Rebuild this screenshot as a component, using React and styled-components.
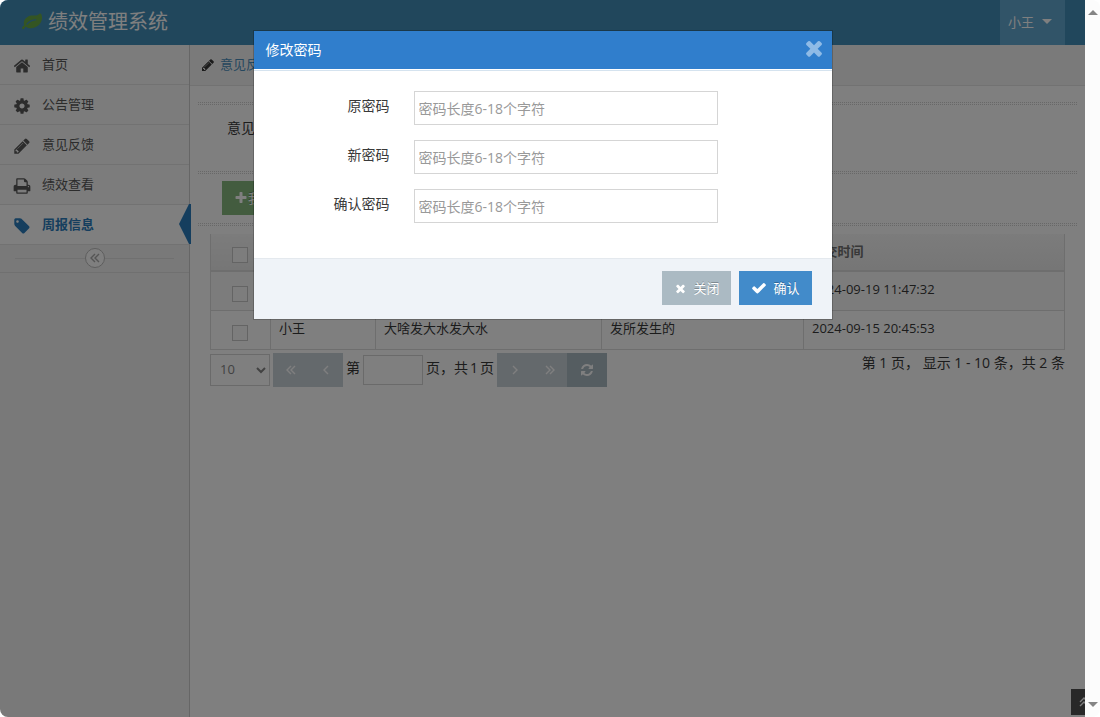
import React from "react";
import styled, { createGlobalStyle } from "styled-components";

const GlobalStyle = createGlobalStyle`
  * {
    box-sizing: border-box;
  }

  body {
    margin: 0;
    background: #ffffff;
    color: #393939;
    font-family: "Open Sans", "Noto Sans CJK SC", sans-serif;
    font-size: 13px;
    line-height: 20px;
  }

  button,
  input,
  select {
    margin: 0;
    font-family: inherit;
  }
`;

const icons = {
  leaf: "M1280 704q0-26-19-45t-45-19q-172 0-318 49.500t-259.500 134-235.500 219.500q-19 21-19 45 0 26 19 45t45 19q24 0 45-19 27-24 74-71t67-66q137-124 268.500-176t313.500-52q26 0 45-19t19-45zm512-198q0 95-20 193-46 224-184.500 383t-357.500 268q-214 108-438 108-148 0-286-47-15-5-88-42t-96-37q-16 0-39.500 32t-45 70-52.500 70-60 32q-43 0-63.500-17.500t-45.500-59.500q-2-4-6-11t-5.500-10-3-9.500-1.500-13.500q0-35 31-73.500t68-65.500 68-56 31-48q0-4-14-38t-16-44q-9-51-9-104 0-115 43.500-220t119-184.500 170.500-139 204-95.500q55-18 145-25.500t179.500-9 178.500-6 163.500-24 113.500-56.500l29.500-29.500 29.500-28 27-20 36.500-16 43.500-4.500q39 0 70.500 46t47.500 112 24 124 8 96z",
  home: "M1472 992v480q0 26-19 45t-45 19h-384v-384h-256v384h-384q-26 0-45-19t-19-45v-480q0-1 .5-3t.5-3l575-474 575 474q1 2 1 6zm223-69l-62 74q-8 9-21 11h-3q-13 0-21-7l-692-577-692 577q-12 8-24 7-13-2-21-11l-62-74q-8-10-7-23.500t11-21.500l719-599q32-26 76-26t76 26l244 204v-195q0-14 9-23t23-9h192q14 0 23 9t9 23v408l219 182q10 8 11 21.500t-7 23.500z",
  cog: "M1152 896q0-106-75-181t-181-75-181 75-75 181 75 181 181 75 181-75 75-181zm512-109v222q0 12-8 23t-20 13l-185 28q-19 54-39 91 35 50 107 138 10 12 10 25t-9 23q-27 37-99 108t-94 71q-12 0-26-9l-138-108q-44 23-91 38-16 136-29 186-7 28-36 28h-222q-14 0-24.500-8.500t-11.500-21.500l-28-184q-49-16-90-37l-141 107q-10 9-25 9-14 0-25-11-126-114-165-168-7-10-7-23 0-12 8-23 15-21 51-66.500t54-70.500q-27-50-41-99l-183-27q-13-2-21-12.500t-8-23.500v-222q0-12 8-23t19-13l186-28q14-46 39-92-40-57-107-138-10-12-10-24 0-10 9-23 26-36 98.500-107.500t94.500-71.500q13 0 26 10l138 107q44-23 91-38 16-136 29-186 7-28 36-28h222q14 0 24.500 8.500t11.500 21.500l28 184q49 16 90 37l142-107q9-9 24-9 13 0 25 10 129 119 165 170 7 8 7 22 0 12-8 23-15 21-51 66.500t-54 70.500q26 50 41 98l183 28q13 2 21 12.500t8 23.500z",
  pencil: "M491 1536l91-91-235-235-91 91v107h128v128h107zm523-928q0-22-22-22-10 0-17 7l-542 542q-7 7-7 17 0 22 22 22 10 0 17-7l542-542q7-7 7-17zm-54-192l416 416-832 832h-416v-416zm683 96q0 53-37 90l-166 166-416-416 166-165q36-38 90-38 53 0 91 38l235 234q37 39 37 91z",
  print: "M448 1536h896v-256h-896v256zm0-640h896v-384h-160q-40 0-68-28t-28-68v-160h-640v640zm1152 64q0-26-19-45t-45-19-45 19-19 45 19 45 45 19 45-19 19-45zm128 0v416q0 13-9.500 22.500t-22.500 9.500h-224v160q0 40-28 68t-68 28h-960q-40 0-68-28t-28-68v-160h-224q-13 0-22.500-9.500t-9.500-22.500v-416q0-79 56.500-135.500t135.500-56.500h64v-544q0-40 28-68t68-28h672q40 0 88 20t76 48l152 152q28 28 48 76t20 88v256h64q79 0 135.500 56.500t56.500 135.500z",
  tag: "M576 448q0-53-37.500-90.500t-90.500-37.500-90.500 37.500-37.500 90.500 37.500 90.500 90.500 37.500 90.500-37.500 37.500-90.500zm1067 576q0 53-37 90l-491 492q-39 37-91 37-53 0-90-37l-715-716q-38-37-64.500-101t-26.500-117v-416q0-52 38-90t90-38h416q53 0 117 26.500t102 64.500l715 714q37 39 37 91z",
  times: "M1490 1322q0 40-28 68l-136 136q-28 28-68 28t-68-28l-294-294-294 294q-28 28-68 28t-68-28l-136-136q-28-28-28-68t28-68l294-294-294-294q-28-28-28-68t28-68l136-136q28-28 68-28t68 28l294 294 294-294q28-28 68-28t68 28l136 136q28 28 28 68t-28 68l-294 294 294 294q28 28 28 68z",
  check: "M1671 566q0 40-28 68l-724 724-136 136q-28 28-68 28t-68-28l-136-136-362-362q-28-28-28-68t28-68l136-136q28-28 68-28t68 28l294 295 656-657q28-28 68-28t68 28l136 136q28 28 28 68z",
  refresh: "M1639 1056q0 5-1 7-64 268-268 434.500t-478 166.500q-146 0-282.500-55t-243.500-157l-129 129q-19 19-45 19t-45-19-19-45v-448q0-26 19-45t45-19h448q26 0 45 19t19 45-19 45l-137 137q71 66 161 102t187 36q134 0 250-65t186-179q11-17 53-117 8-23 30-23h192q13 0 22.500 9.500t9.500 22.500zm25-800v448q0 26-19 45t-45 19h-448q-26 0-45-19t-19-45 19-45l138-138q-148-137-349-137-134 0-250 65t-186 179q-11 17-53 117-8 23-30 23h-199q-13 0-22.500-9.500t-9.500-22.500v-7q65-268 270-434.500t480-166.500q146 0 284 55.500t245 156.500l130-129q19-19 45-19t45 19 19 45z",
  plus: "M1600 736v192q0 40-28 68t-68 28h-416v416q0 40-28 68t-68 28h-192q-40 0-68-28t-28-68v-416h-416q-40 0-68-28t-28-68v-192q0-40 28-68t68-28h416v-416q0-40 28-68t68-28h192q40 0 68 28t28 68v416h416q40 0 68 28t28 68z",
};

const Svg = styled.svg`
  display: block;
  flex: none;
`;

const Icon = ({ name, size = 14 }) => (
  <Svg width={size} height={size} viewBox="0 0 1792 1792" fill="currentColor" aria-hidden="true">
    <path d={icons[name]} />
  </Svg>
);

const angles = {
  left: "M9 3L5 7L9 11",
  right: "M5 3L9 7L5 11",
  doubleLeft: "M7 3L3 7L7 11M11 3L7 7L11 11",
  doubleRight: "M3 3L7 7L3 11M7 3L11 7L7 11",
  doubleUp: "M3 7L7 3L11 7M3 11L7 7L11 11",
};

const Angle = ({ name, size = 14 }) => (
  <Svg width={size} height={size} viewBox="0 0 14 14" fill="none" stroke="currentColor" strokeWidth="1.4" aria-hidden="true">
    <path d={angles[name]} />
  </Svg>
);

const Window = styled.div`
  display: flex;
  min-height: 100vh;
`;

const Page = styled.div`
  position: relative;
  display: flex;
  flex: 1;
  flex-direction: column;
  min-width: 0;
  overflow: hidden;
  background: #ffffff;
  border-radius: 8px 0 0 8px;
`;

const ScrollTrack = styled.div`
  display: flex;
  flex: none;
  flex-direction: column;
  align-items: center;
  justify-content: space-between;
  width: 15px;
  padding: 10px 0;
  background: #fcfcfc;
  border-radius: 0 8px 8px 0;
`;

const ScrollArrow = styled.span`
  border: 5px solid transparent;
  border-top-width: ${(props) => (props.$up ? 0 : "5px")};
  border-bottom-width: ${(props) => (props.$up ? "5px" : 0)};
  border-top-color: ${(props) => (props.$up ? "transparent" : "#858585")};
  border-bottom-color: ${(props) => (props.$up ? "#858585" : "transparent")};
`;

const Navbar = styled.header`
  display: flex;
  align-items: center;
  justify-content: space-between;
  height: 45px;
  padding: 0 20px 0 22px;
  background: #438eb9;
`;

const Brand = styled.a`
  display: flex;
  align-items: center;
  gap: 6px;
  padding-bottom: 2px;
  color: #ffffff;
  font-size: 20px;
  line-height: 42px;
  text-decoration: none;

  svg {
    color: #69aa46;
  }
`;

const UserButton = styled.button`
  display: flex;
  align-items: center;
  gap: 8px;
  height: 45px;
  padding: 0 13px 2px 8px;
  border: 0;
  background: #62a8d1;
  color: #ffffff;
  font-size: 13px;
`;

const Caret = styled.span`
  border: 5px solid transparent;
  border-top-color: #ffffff;
  border-bottom: 0;
`;

const Main = styled.div`
  display: flex;
  flex: 1;
`;

const Sidebar = styled.nav`
  flex: none;
  width: 190px;
  background: #f2f2f2;
  border-right: 1px solid #cccccc;
`;

const Menu = styled.ul`
  margin: 0;
  padding: 0;
  list-style: none;
`;

const MenuItem = styled.li`
  position: relative;
  border-bottom: 1px solid #e5e5e5;
`;

const MenuLink = styled.a`
  display: flex;
  align-items: center;
  gap: 11px;
  height: 39px;
  padding: 0 13px 2px;
  background: ${(props) => (props.$active ? "#ffffff" : "#f9f9f9")};
  color: ${(props) => (props.$active ? "#2b7dbc" : "#585858")};
  font-weight: ${(props) => (props.$active ? "bold" : "normal")};
  text-decoration: none;

  svg {
    margin-top: 4px;
  }
`;

const ActiveMark = styled.span`
  position: absolute;
  top: -1px;
  right: 0;
  height: 40px;
  border: 20px solid transparent;
  border-left-width: 0;
  border-right: 10px solid #2b7dbc;
  box-shadow: 2px 0 0 #2b7dbc;
`;

const SidebarToggle = styled.div`
  display: flex;
  align-items: center;
  height: 28px;
  padding: 0 15px 1px;
  background: #f3f3f3;
  border-bottom: 1px solid #e0e0e0;

  &::before,
  &::after {
    flex: 1;
    height: 1px;
    background: #e0e0e0;
    content: "";
  }
`;

const ToggleButton = styled.button`
  display: grid;
  place-items: center;
  width: 20px;
  height: 20px;
  padding: 0;
  border: 1px solid #bbbbbb;
  border-radius: 10px;
  background: #ffffff;
  color: #aaaaaa;
`;

const Content = styled.main`
  flex: 1;
  min-width: 0;
`;

const Breadcrumb = styled.div`
  display: flex;
  align-items: center;
  gap: 5px;
  height: 41px;
  padding: 0 11px;
  background: #f5f5f5;
  border-bottom: 1px solid #e5e5e5;

  a {
    padding-bottom: 2px;
    color: #4c8fbd;
    text-decoration: none;
  }
`;

const PageBody = styled.div`
  padding: 16px 8px;
`;

const Divider = styled.hr`
  height: 3px;
  margin: 0;
  border: 0;
  border-top: 1px dotted #d0d0d0;
  border-bottom: 1px dotted #d0d0d0;
`;

const SearchBar = styled.div`
  height: 66px;
  padding: 13px 29px;
  font-size: 14px;
`;

const Toolbar = styled.div`
  height: 49px;
  padding: 7px 24px;
`;

const Grid = styled.section`
  padding: 8px 12px;
`;

const Table = styled.table`
  width: 100%;
  border-collapse: collapse;
  table-layout: fixed;
`;

const HeadCell = styled.th`
  height: 37px;
  padding: 6px 8px 8px;
  border-bottom: 2px solid #dddddd;
  background: linear-gradient(to bottom, #f8f8f8, #ececec);
  color: #707070;
  font-weight: bold;
  text-align: left;
  vertical-align: middle;

  &:first-child {
    border-left: 1px solid #dddddd;
  }

  &:last-child {
    border-right: 1px solid #dddddd;
  }
`;

const Row = styled.tr`
  background: ${(props) => (props.$striped ? "#f9f9f9" : "#ffffff")};
`;

const Cell = styled.td`
  height: 39px;
  padding: 7px 8px 11px;
  border: 1px solid #dddddd;
`;

const Check = styled.input`
  display: block;
  width: 16px;
  height: 16px;
  margin: 5px auto 0;
  appearance: none;
  border: 1px solid #c8c8c8;
  background: #fafafa;
`;

const CheckHeadCell = styled(HeadCell)`
  padding: 0 2px 0 0;
`;

const CheckCell = styled(Cell)`
  padding: 0 2px 0 0;
`;

const Footer = styled.div`
  display: flex;
  justify-content: space-between;
  padding-top: 3px;
  font-size: 14px;
`;

const Pager = styled.div`
  display: flex;
  align-items: center;
  gap: 3px;
`;

const PageSize = styled.select`
  width: 60px;
  height: 32px;
  padding: 0 0 2px 5px;
  border: 1px solid #d5d5d5;
  border-radius: 0;
  background: #ffffff;
  color: #858585;
  font-size: 13px;
`;

const ButtonGroup = styled.div`
  display: flex;
`;

const PagerButton = styled.button`
  display: grid;
  place-items: center;
  width: ${(props) => (props.$wide ? "40px" : "35px")};
  height: 34px;
  padding: 0;
  border: 0;
  background: ${(props) => (props.$wide ? "#abbac3" : "#c8d2d8")};
  color: #ffffff;
`;

const PagerText = styled.span`
  display: flex;
  gap: 2px;
  padding-bottom: 4px;
`;

const PageInput = styled.input`
  width: 60px;
  height: 30px;
  border: 1px solid #d5d5d5;
  background: #ffffff;
`;

const Summary = styled.span`
  white-space: pre;
`;

const Button = styled.button`
  display: flex;
  align-items: center;
  gap: ${(props) => (props.$tight ? 0 : "6px")};
  height: 34px;
  padding: 0 12px 2px;
  border: 0;
  background: ${(props) => props.$color};
  color: #ffffff;
  font-size: 13px;
  text-shadow: 0 -1px 0 rgba(0, 0, 0, 0.25);

  svg {
    margin-top: 2px;
  }
`;

const ScrollUp = styled.button`
  position: absolute;
  right: -12px;
  bottom: 2px;
  display: grid;
  place-items: center;
  width: 26px;
  height: 26px;
  padding: 0;
  border: 0;
  background: #505050;
  color: #ffffff;
`;

const Backdrop = styled.div`
  position: absolute;
  inset: 0;
  padding: 30px 10px;
  background: rgba(0, 0, 0, 0.5);
`;

const Dialog = styled.section`
  width: 100%;
  max-width: 580px;
  margin: 0 auto;
  border: 1px solid rgba(0, 0, 0, 0.2);
  background: #ffffff;
  background-clip: padding-box;
`;

const DialogHeader = styled.div`
  display: flex;
  align-items: center;
  justify-content: space-between;
  height: 38px;
  padding: 0 6px 0 12px;
  background: #307ecc;
  color: #ffffff;
`;

const DialogTitle = styled.h2`
  margin: 0;
  font-size: 14px;
  font-weight: normal;
`;

const CloseButton = styled.button`
  padding: 0 0 4px;
  border: 0;
  background: none;
  color: #8fbbe6;
`;

const DialogForm = styled.form`
  display: flex;
  flex-direction: column;
  gap: 15px;
  margin-top: 1px;
  padding: 20px 12px 35px;
  border-top: 1px solid #d5e3ef;
`;

const Field = styled.div`
  display: grid;
  grid-template-columns: 124px 304px;
  column-gap: 24px;
  font-size: 14px;

  label {
    padding-top: 5px;
    text-align: right;
  }
`;

const TextInput = styled.input`
  height: 34px;
  padding: 5px 4px 4px;
  border: 1px solid #d5d5d5;
  font-size: 14px;

  &::placeholder {
    color: #999999;
  }
`;

const DialogFooter = styled.div`
  display: flex;
  justify-content: flex-end;
  gap: 8px;
  padding: 12px 20px 14px;
  border-top: 1px solid #e4e9ee;
  background: #eff3f8;
`;

const menu = [
  { icon: "home", label: "首页" },
  { icon: "cog", label: "公告管理" },
  { icon: "pencil", label: "意见反馈" },
  { icon: "print", label: "绩效查看" },
  { icon: "tag", label: "周报信息", active: true },
];

const rows = [
  { user: "小王", title: "", content: "", time: "2024-09-19 11:47:32" },
  { user: "小王", title: "大啥发大水发大水", content: "发所发生的", time: "2024-09-15 20:45:53" },
];

const fields = [
  { id: "old-password", label: "原密码" },
  { id: "new-password", label: "新密码" },
  { id: "confirm-password", label: "确认密码" },
];

const PasswordDialog = () => (
  <Backdrop>
    <Dialog role="dialog" aria-modal="true" aria-labelledby="dialog-title">
      <DialogHeader>
        <DialogTitle id="dialog-title">修改密码</DialogTitle>
        <CloseButton type="button" aria-label="关闭">
          <Icon name="times" size={24} />
        </CloseButton>
      </DialogHeader>
      <DialogForm id="password-form">
        {fields.map((field) => (
          <Field key={field.id}>
            <label htmlFor={field.id}>{field.label}</label>
            <TextInput id={field.id} type="password" placeholder="密码长度6-18个字符" />
          </Field>
        ))}
      </DialogForm>
      <DialogFooter>
        <Button type="button" $color="#abbac3">
          <Icon name="times" size={13} />
          关闭
        </Button>
        <Button type="submit" form="password-form" $color="#428bca">
          <Icon name="check" size={16} />
          确认
        </Button>
      </DialogFooter>
    </Dialog>
  </Backdrop>
);

const ReportTable = () => (
  <Table>
    <colgroup>
      <col style={{ width: 60 }} />
      <col style={{ width: 105 }} />
      <col style={{ width: 226 }} />
      <col style={{ width: 202 }} />
      <col />
    </colgroup>
    <thead>
      <tr>
        <CheckHeadCell>
          <Check type="checkbox" aria-label="全选" />
        </CheckHeadCell>
        <HeadCell>提交人</HeadCell>
        <HeadCell>标题</HeadCell>
        <HeadCell>内容</HeadCell>
        <HeadCell>提交时间</HeadCell>
      </tr>
    </thead>
    <tbody>
      {rows.map((row, index) => (
        <Row key={row.time} $striped={index % 2 === 0}>
          <CheckCell>
            <Check type="checkbox" aria-label={row.time} />
          </CheckCell>
          <Cell>{row.user}</Cell>
          <Cell>{row.title}</Cell>
          <Cell>{row.content}</Cell>
          <Cell>{row.time}</Cell>
        </Row>
      ))}
    </tbody>
  </Table>
);

const App = () => {
  return (
    <Window>
      <GlobalStyle />
      <Page>
        <Navbar>
          <Brand href="#">
            <Icon name="leaf" size={20} />
            绩效管理系统
          </Brand>
          <UserButton type="button">
            小王
            <Caret />
          </UserButton>
        </Navbar>
        <Main>
          <Sidebar>
            <Menu>
              {menu.map((item) => (
                <MenuItem key={item.label}>
                  <MenuLink href="#" $active={item.active}>
                    <Icon name={item.icon} size={18} />
                    {item.label}
                  </MenuLink>
                  {item.active && <ActiveMark />}
                </MenuItem>
              ))}
            </Menu>
            <SidebarToggle>
              <ToggleButton type="button" aria-label="收起菜单">
                <Angle name="doubleLeft" />
              </ToggleButton>
            </SidebarToggle>
          </Sidebar>
          <Content>
            <Breadcrumb>
              <Icon name="pencil" />
              <a href="#">意见反馈</a>
            </Breadcrumb>
            <PageBody>
              <Divider />
              <SearchBar>意见标题</SearchBar>
              <Divider />
              <Toolbar>
                <Button type="button" $color="#87b87f" $tight>
                  <Icon name="plus" />
                  我要反馈
                </Button>
              </Toolbar>
              <Divider />
              <Grid>
                <ReportTable />
                <Footer>
                  <Pager>
                    <PageSize aria-label="每页条数" defaultValue="10">
                      <option>10</option>
                      <option>20</option>
                      <option>50</option>
                    </PageSize>
                    <ButtonGroup>
                      <PagerButton type="button" aria-label="首页">
                        <Angle name="doubleLeft" />
                      </PagerButton>
                      <PagerButton type="button" aria-label="上一页">
                        <Angle name="left" />
                      </PagerButton>
                    </ButtonGroup>
                    <PagerText>第</PagerText>
                    <PageInput type="text" aria-label="页码" />
                    <PagerText>
                      页，共 <span>1</span> 页
                    </PagerText>
                    <ButtonGroup>
                      <PagerButton type="button" aria-label="下一页">
                        <Angle name="right" />
                      </PagerButton>
                      <PagerButton type="button" aria-label="末页">
                        <Angle name="doubleRight" />
                      </PagerButton>
                      <PagerButton type="button" aria-label="刷新" $wide>
                        <Icon name="refresh" />
                      </PagerButton>
                    </ButtonGroup>
                  </Pager>
                  <Summary>第 1 页， 显示 1 - 10 条，共 2 条</Summary>
                </Footer>
              </Grid>
            </PageBody>
          </Content>
        </Main>
        <ScrollUp type="button" aria-label="返回顶部">
          <Angle name="doubleUp" />
        </ScrollUp>
        <PasswordDialog />
      </Page>
      <ScrollTrack>
        <ScrollArrow $up />
        <ScrollArrow />
      </ScrollTrack>
    </Window>
  );
};

export default App;
